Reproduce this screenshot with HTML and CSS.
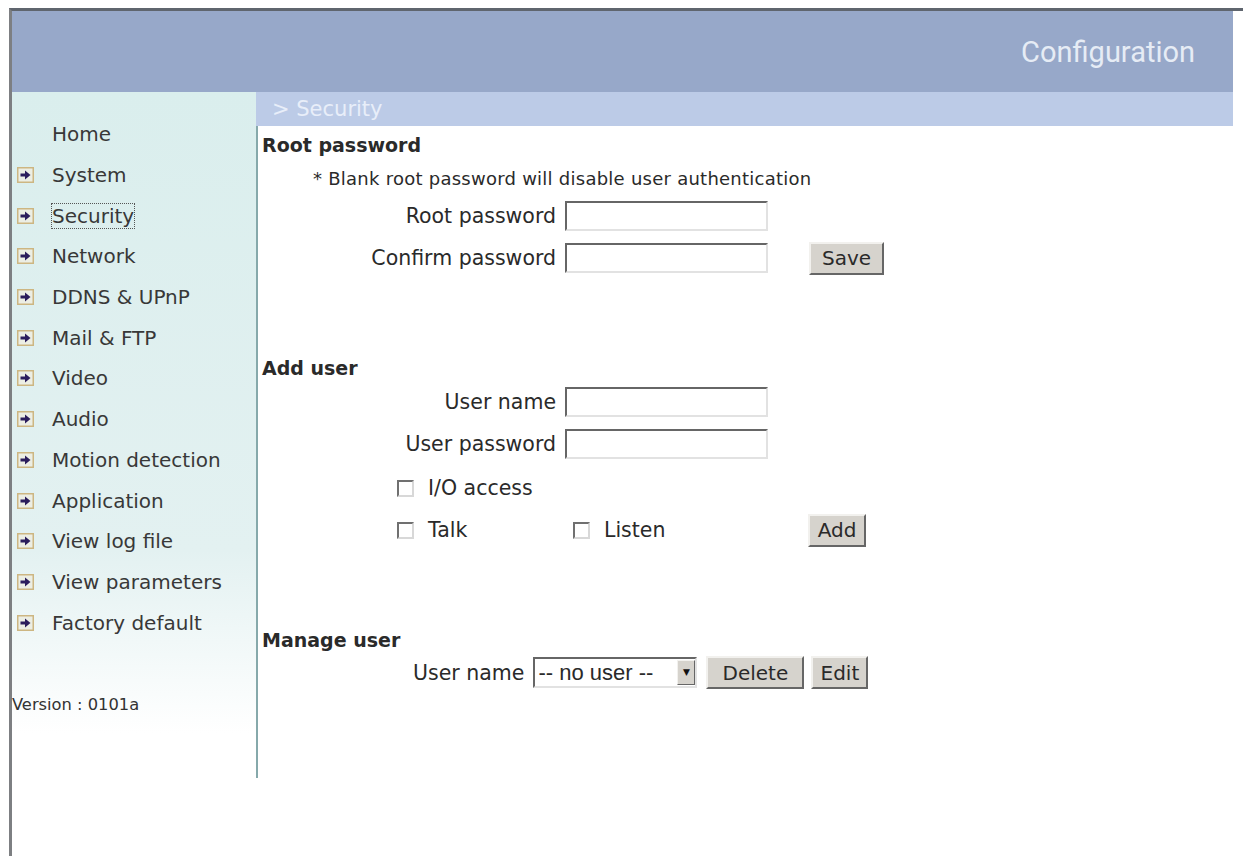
FILE: index.html
```html
<!DOCTYPE html>
<html lang="en">
<head>
    <meta charset="UTF-8">
    <title>Configuration - Security</title>
    <link rel="stylesheet" href="styles.css">
</head>
<body>
    <div class="page">
        <div class="frame">
            <header class="banner">
                <span class="banner-title">Configuration</span>
            </header>

            <div class="layout">
                <aside class="sidebar">
                    <ul class="menu">
                        <li class="menu-home"><a href="#">Home</a></li>
                        <li><span class="arrow"><svg viewBox="0 0 17 16" width="17" height="16"><rect x="0.75" y="0.75" width="15.5" height="14.5" fill="#eceee4" stroke="#cdb682" stroke-width="1.5"/><path d="M3.5 8h6" stroke="#2b1d5c" stroke-width="3"/><path d="M8 3.5 13.5 8 8 12.5z" fill="#2b1d5c"/></svg></span><a href="#">System</a></li>
                        <li class="active"><span class="arrow"><svg viewBox="0 0 17 16" width="17" height="16"><rect x="0.75" y="0.75" width="15.5" height="14.5" fill="#eceee4" stroke="#cdb682" stroke-width="1.5"/><path d="M3.5 8h6" stroke="#2b1d5c" stroke-width="3"/><path d="M8 3.5 13.5 8 8 12.5z" fill="#2b1d5c"/></svg></span><a href="#">Security</a></li>
                        <li><span class="arrow"><svg viewBox="0 0 17 16" width="17" height="16"><rect x="0.75" y="0.75" width="15.5" height="14.5" fill="#eceee4" stroke="#cdb682" stroke-width="1.5"/><path d="M3.5 8h6" stroke="#2b1d5c" stroke-width="3"/><path d="M8 3.5 13.5 8 8 12.5z" fill="#2b1d5c"/></svg></span><a href="#">Network</a></li>
                        <li><span class="arrow"><svg viewBox="0 0 17 16" width="17" height="16"><rect x="0.75" y="0.75" width="15.5" height="14.5" fill="#eceee4" stroke="#cdb682" stroke-width="1.5"/><path d="M3.5 8h6" stroke="#2b1d5c" stroke-width="3"/><path d="M8 3.5 13.5 8 8 12.5z" fill="#2b1d5c"/></svg></span><a href="#">DDNS &amp; UPnP</a></li>
                        <li><span class="arrow"><svg viewBox="0 0 17 16" width="17" height="16"><rect x="0.75" y="0.75" width="15.5" height="14.5" fill="#eceee4" stroke="#cdb682" stroke-width="1.5"/><path d="M3.5 8h6" stroke="#2b1d5c" stroke-width="3"/><path d="M8 3.5 13.5 8 8 12.5z" fill="#2b1d5c"/></svg></span><a href="#">Mail &amp; FTP</a></li>
                        <li><span class="arrow"><svg viewBox="0 0 17 16" width="17" height="16"><rect x="0.75" y="0.75" width="15.5" height="14.5" fill="#eceee4" stroke="#cdb682" stroke-width="1.5"/><path d="M3.5 8h6" stroke="#2b1d5c" stroke-width="3"/><path d="M8 3.5 13.5 8 8 12.5z" fill="#2b1d5c"/></svg></span><a href="#">Video</a></li>
                        <li><span class="arrow"><svg viewBox="0 0 17 16" width="17" height="16"><rect x="0.75" y="0.75" width="15.5" height="14.5" fill="#eceee4" stroke="#cdb682" stroke-width="1.5"/><path d="M3.5 8h6" stroke="#2b1d5c" stroke-width="3"/><path d="M8 3.5 13.5 8 8 12.5z" fill="#2b1d5c"/></svg></span><a href="#">Audio</a></li>
                        <li><span class="arrow"><svg viewBox="0 0 17 16" width="17" height="16"><rect x="0.75" y="0.75" width="15.5" height="14.5" fill="#eceee4" stroke="#cdb682" stroke-width="1.5"/><path d="M3.5 8h6" stroke="#2b1d5c" stroke-width="3"/><path d="M8 3.5 13.5 8 8 12.5z" fill="#2b1d5c"/></svg></span><a href="#">Motion detection</a></li>
                        <li><span class="arrow"><svg viewBox="0 0 17 16" width="17" height="16"><rect x="0.75" y="0.75" width="15.5" height="14.5" fill="#eceee4" stroke="#cdb682" stroke-width="1.5"/><path d="M3.5 8h6" stroke="#2b1d5c" stroke-width="3"/><path d="M8 3.5 13.5 8 8 12.5z" fill="#2b1d5c"/></svg></span><a href="#">Application</a></li>
                        <li><span class="arrow"><svg viewBox="0 0 17 16" width="17" height="16"><rect x="0.75" y="0.75" width="15.5" height="14.5" fill="#eceee4" stroke="#cdb682" stroke-width="1.5"/><path d="M3.5 8h6" stroke="#2b1d5c" stroke-width="3"/><path d="M8 3.5 13.5 8 8 12.5z" fill="#2b1d5c"/></svg></span><a href="#">View log file</a></li>
                        <li><span class="arrow"><svg viewBox="0 0 17 16" width="17" height="16"><rect x="0.75" y="0.75" width="15.5" height="14.5" fill="#eceee4" stroke="#cdb682" stroke-width="1.5"/><path d="M3.5 8h6" stroke="#2b1d5c" stroke-width="3"/><path d="M8 3.5 13.5 8 8 12.5z" fill="#2b1d5c"/></svg></span><a href="#">View parameters</a></li>
                        <li><span class="arrow"><svg viewBox="0 0 17 16" width="17" height="16"><rect x="0.75" y="0.75" width="15.5" height="14.5" fill="#eceee4" stroke="#cdb682" stroke-width="1.5"/><path d="M3.5 8h6" stroke="#2b1d5c" stroke-width="3"/><path d="M8 3.5 13.5 8 8 12.5z" fill="#2b1d5c"/></svg></span><a href="#">Factory default</a></li>
                    </ul>
                    <div class="version">Version : 0101a</div>
                </aside>

                <main class="main">
                    <div class="crumb">&gt; Security</div>
                    <div class="content">
                        <form class="section section-root">
                            <div class="section-title">Root password</div>
                            <div class="note">* Blank root password will disable user authentication</div>
                            <div class="field-row row-first">
                                <label for="rootpw">Root password</label>
                                <input type="password" id="rootpw">
                            </div>
                            <div class="field-row row-next">
                                <label for="confirmpw">Confirm password</label>
                                <input type="password" id="confirmpw">
                                <button type="button" class="btn btn-save">Save</button>
                            </div>
                        </form>

                        <form class="section section-add">
                            <div class="section-title">Add user</div>
                            <div class="field-row row-first-small">
                                <label for="username">User name</label>
                                <input type="text" id="username">
                            </div>
                            <div class="field-row row-next-small">
                                <label for="userpw">User password</label>
                                <input type="password" id="userpw">
                            </div>
                            <div class="check-row row-io">
                                <label class="check"><input type="checkbox"> I/O access</label>
                            </div>
                            <div class="check-row row-talk">
                                <label class="check check-talk"><input type="checkbox"> Talk</label>
                                <label class="check check-listen"><input type="checkbox"> Listen</label>
                                <button type="button" class="btn btn-add">Add</button>
                            </div>
                        </form>

                        <form class="section section-manage">
                            <div class="section-title">Manage user</div>
                            <div class="manage-row">
                                <label for="userlist">User name</label>
                                <div class="select-wrap">
                                    <select id="userlist">
                                        <option>-- no user --</option>
                                    </select>
                                    <span class="select-arrow">&#9660;</span>
                                </div>
                                <button type="button" class="btn btn-delete">Delete</button>
                                <button type="button" class="btn btn-edit">Edit</button>
                            </div>
                        </form>
                    </div>
                </main>
            </div>
        </div>
    </div>
</body>
</html>
```

FILE: styles.css
```css
* {
    margin: 0;
    padding: 0;
    box-sizing: border-box;
}
body {
    font-family: 'DejaVu Sans', Verdana, sans-serif;
    color: #2a2a2a;
    background: #fff;
}
.page {
    margin: 8px 0 0 9px;
    border-top: 3px solid #5f656e;
    border-left: 3px solid #7d7f82;
    min-height: 848px;
}
.frame {
    width: 1221px;
}

/* top banner */
.banner {
    height: 81px;
    background-color: #97a8c9;
    display: flex;
    align-items: center;
    justify-content: flex-end;
    padding-right: 38px;
}
.banner-title {
    font-family: Roboto, 'Liberation Sans', sans-serif;
    font-size: 29px;
    color: #e6ecf5;
}

.layout {
    display: flex;
}

/* left menu */
.sidebar {
    width: 244px;
    min-height: 763px;
    background: linear-gradient(to bottom, #daeeed 0%, #e3f1f1 60%, #ffffff 84%);
}
.menu {
    list-style: none;
    padding-top: 22px;
}
.menu li {
    height: 40.7px;
    display: flex;
    align-items: center;
    font-size: 20px;
}
.menu a {
    color: #383838;
    text-decoration: none;
}
.menu-home a {
    margin-left: 40px;
}
.arrow {
    width: 17px;
    height: 16px;
    margin: 0 18px 0 5px;
    display: flex;
}
.menu li.active a {
    outline: 1px dotted #555;
}
.version {
    margin-top: 52px;
    font-size: 16.3px;
    color: #333;
}

/* right column */
.main {
    flex: 1;
}
.crumb {
    height: 34px;
    background-color: #bccbe7;
    color: #e8eef9;
    font-size: 21px;
    line-height: 34px;
    padding-left: 16px;
}
.content {
    border-left: 2px solid #86a9ab;
    min-height: 652px;
    padding-left: 4px;
    font-size: 20.5px;
}
.section-title {
    height: 26px;
    line-height: 26px;
    font-weight: bold;
    font-size: 19px;
}
.section-root {
    padding-top: 6px;
}
.section-add {
    margin-top: 82px;
}
.section-manage {
    margin-top: 82px;
}
.note {
    margin-top: 8px;
    line-height: 26px;
    padding-left: 51px;
    font-size: 18px;
    letter-spacing: 0.25px;
}

/* label + input rows */
.field-row {
    display: flex;
    align-items: center;
    height: 30px;
}
.field-row label {
    width: 294px;
    text-align: right;
    margin-right: 9px;
}
.row-first { margin-top: 9px; }
.row-next { margin-top: 12px; }
.row-first-small { margin-top: 6px; }
.row-next-small { margin-top: 12px; }

input[type="text"],
input[type="password"] {
    width: 203px;
    height: 30px;
    border: 2px solid;
    border-color: #666 #e2e2e2 #e2e2e2 #666;
    background: #fff;
}

.btn {
    font-family: 'DejaVu Sans', Verdana, sans-serif;
    font-size: 20px;
    color: #2a2a2a;
    background-color: #d6d3cd;
    border: 2px solid;
    border-color: #f2f1ee #666 #666 #f2f1ee;
    height: 33px;
    padding: 0;
}
.btn-save {
    margin-left: 41px;
    width: 75px;
}

/* checkbox rows */
.check-row {
    display: flex;
    align-items: center;
    height: 30px;
    padding-left: 135px;
}
.row-io { margin-top: 14px; }
.row-talk { margin-top: 12px; }
.check {
    display: flex;
    align-items: center;
}
.check input {
    appearance: none;
    width: 17px;
    height: 17px;
    border: 2px solid;
    border-color: #707070 #d8d8d8 #d8d8d8 #707070;
    background: #fff;
    margin-right: 14px;
}
.check-talk {
    width: 176px;
}
.check-listen {
    width: 235px;
}
.btn-add {
    width: 58px;
}

/* manage user row */
.manage-row {
    display: flex;
    align-items: center;
    height: 31px;
    margin-top: 4px;
    padding-left: 151px;
}
.manage-row label {
    margin-right: 9px;
}
.select-wrap {
    position: relative;
    width: 164px;
    height: 31px;
    margin-right: 9px;
}
.select-wrap select {
    appearance: none;
    width: 100%;
    height: 100%;
    border: 2px solid;
    border-color: #666 #e2e2e2 #e2e2e2 #666;
    background: #fff;
    font-family: 'Liberation Sans', Arial, sans-serif;
    font-size: 22px;
    color: #2a2a2a;
    padding-left: 3px;
}
.select-arrow {
    position: absolute;
    right: 2px;
    top: 3px;
    width: 18px;
    height: 25px;
    background: #d6d3cd;
    border: 1px solid;
    border-color: #f2f1ee #666 #666 #f2f1ee;
    font-size: 9px;
    line-height: 23px;
    text-align: center;
    color: #111;
}
.btn-delete {
    width: 98px;
    margin-right: 7px;
}
.btn-edit {
    width: 57px;
}
```
